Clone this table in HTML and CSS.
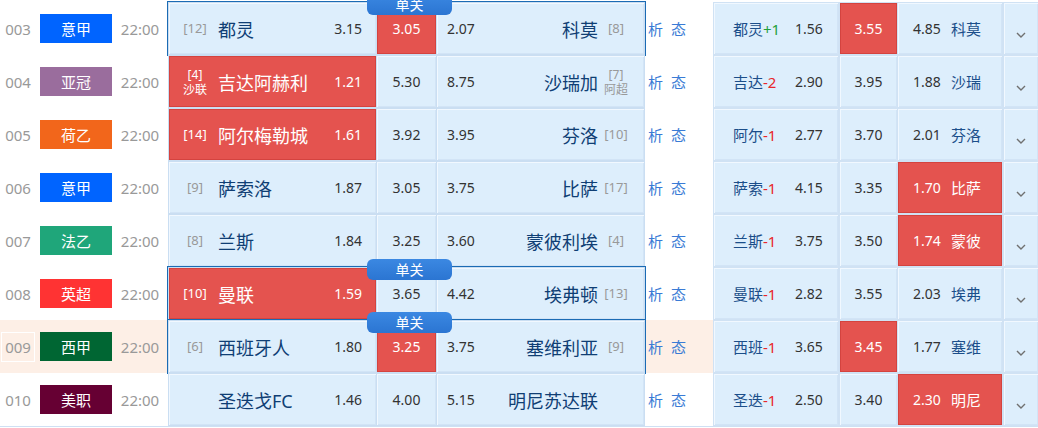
FILE: index.html
```html
<!DOCTYPE html>
<html lang="zh-CN">
<head>
<meta charset="utf-8">
<title>赛事列表</title>
<link rel="stylesheet" href="styles.css">
</head>
<body>
<div class="list">

  <div class="row">
    <div class="num"><span>003</span></div>
    <div class="lg"><span class="badge c-yijia">意甲</span></div>
    <div class="time">22:00</div>
    <div class="main sel">
      <span class="tag">单关</span>
      <div class="cell home"><span class="rank">[12]</span><span class="team">都灵</span><span class="odd">3.15</span></div>
      <div class="cell draw hot">3.05</div>
      <div class="cell away"><span class="odd">2.07</span><span class="team">科莫</span><span class="rank">[8]</span></div>
    </div>
    <div class="ana"><span>析</span><span>态</span></div>
    <div class="hc">
      <div class="cell h1"><span class="hteam">都灵<em class="up">+1</em></span><span class="odd">1.56</span></div>
      <div class="cell h2 hot">3.55</div>
      <div class="cell h3"><span class="odd">4.85</span><span class="hteam">科莫</span></div>
      <div class="cell h4"><svg width="10" height="6" viewBox="0 0 10 6"><polyline points="1,1 5,5 9,1" fill="none" stroke="#707070" stroke-width="1.4"/></svg></div>
    </div>
  </div>

  <div class="row">
    <div class="num"><span>004</span></div>
    <div class="lg"><span class="badge c-yaguan">亚冠</span></div>
    <div class="time">22:00</div>
    <div class="main">
      <div class="cell home hot"><span class="rank two">[4]<br>沙联</span><span class="team">吉达阿赫利</span><span class="odd">1.21</span></div>
      <div class="cell draw">5.30</div>
      <div class="cell away"><span class="odd">8.75</span><span class="team">沙瑞加</span><span class="rank two">[7]<br>阿超</span></div>
    </div>
    <div class="ana"><span>析</span><span>态</span></div>
    <div class="hc">
      <div class="cell h1"><span class="hteam">吉达<em class="down">-2</em></span><span class="odd">2.90</span></div>
      <div class="cell h2">3.95</div>
      <div class="cell h3"><span class="odd">1.88</span><span class="hteam">沙瑞</span></div>
      <div class="cell h4"><svg width="10" height="6" viewBox="0 0 10 6"><polyline points="1,1 5,5 9,1" fill="none" stroke="#707070" stroke-width="1.4"/></svg></div>
    </div>
  </div>

  <div class="row">
    <div class="num"><span>005</span></div>
    <div class="lg"><span class="badge c-heyi">荷乙</span></div>
    <div class="time">22:00</div>
    <div class="main">
      <div class="cell home hot"><span class="rank">[14]</span><span class="team">阿尔梅勒城</span><span class="odd">1.61</span></div>
      <div class="cell draw">3.92</div>
      <div class="cell away"><span class="odd">3.95</span><span class="team">芬洛</span><span class="rank">[10]</span></div>
    </div>
    <div class="ana"><span>析</span><span>态</span></div>
    <div class="hc">
      <div class="cell h1"><span class="hteam">阿尔<em class="down">-1</em></span><span class="odd">2.77</span></div>
      <div class="cell h2">3.70</div>
      <div class="cell h3"><span class="odd">2.01</span><span class="hteam">芬洛</span></div>
      <div class="cell h4"><svg width="10" height="6" viewBox="0 0 10 6"><polyline points="1,1 5,5 9,1" fill="none" stroke="#707070" stroke-width="1.4"/></svg></div>
    </div>
  </div>

  <div class="row">
    <div class="num"><span>006</span></div>
    <div class="lg"><span class="badge c-yijia">意甲</span></div>
    <div class="time">22:00</div>
    <div class="main">
      <div class="cell home"><span class="rank">[9]</span><span class="team">萨索洛</span><span class="odd">1.87</span></div>
      <div class="cell draw">3.05</div>
      <div class="cell away"><span class="odd">3.75</span><span class="team">比萨</span><span class="rank">[17]</span></div>
    </div>
    <div class="ana"><span>析</span><span>态</span></div>
    <div class="hc">
      <div class="cell h1"><span class="hteam">萨索<em class="down">-1</em></span><span class="odd">4.15</span></div>
      <div class="cell h2">3.35</div>
      <div class="cell h3 hot"><span class="odd">1.70</span><span class="hteam">比萨</span></div>
      <div class="cell h4"><svg width="10" height="6" viewBox="0 0 10 6"><polyline points="1,1 5,5 9,1" fill="none" stroke="#707070" stroke-width="1.4"/></svg></div>
    </div>
  </div>

  <div class="row">
    <div class="num"><span>007</span></div>
    <div class="lg"><span class="badge c-fayi">法乙</span></div>
    <div class="time">22:00</div>
    <div class="main">
      <div class="cell home"><span class="rank">[8]</span><span class="team">兰斯</span><span class="odd">1.84</span></div>
      <div class="cell draw">3.25</div>
      <div class="cell away"><span class="odd">3.60</span><span class="team">蒙彼利埃</span><span class="rank">[4]</span></div>
    </div>
    <div class="ana"><span>析</span><span>态</span></div>
    <div class="hc">
      <div class="cell h1"><span class="hteam">兰斯<em class="down">-1</em></span><span class="odd">3.75</span></div>
      <div class="cell h2">3.50</div>
      <div class="cell h3 hot"><span class="odd">1.74</span><span class="hteam">蒙彼</span></div>
      <div class="cell h4"><svg width="10" height="6" viewBox="0 0 10 6"><polyline points="1,1 5,5 9,1" fill="none" stroke="#707070" stroke-width="1.4"/></svg></div>
    </div>
  </div>

  <div class="row">
    <div class="num"><span>008</span></div>
    <div class="lg"><span class="badge c-yingchao">英超</span></div>
    <div class="time">22:00</div>
    <div class="main sel">
      <span class="tag">单关</span>
      <div class="cell home hot"><span class="rank">[10]</span><span class="team">曼联</span><span class="odd">1.59</span></div>
      <div class="cell draw">3.65</div>
      <div class="cell away"><span class="odd">4.42</span><span class="team">埃弗顿</span><span class="rank">[13]</span></div>
    </div>
    <div class="ana"><span>析</span><span>态</span></div>
    <div class="hc">
      <div class="cell h1"><span class="hteam">曼联<em class="down">-1</em></span><span class="odd">2.82</span></div>
      <div class="cell h2">3.55</div>
      <div class="cell h3"><span class="odd">2.03</span><span class="hteam">埃弗</span></div>
      <div class="cell h4"><svg width="10" height="6" viewBox="0 0 10 6"><polyline points="1,1 5,5 9,1" fill="none" stroke="#707070" stroke-width="1.4"/></svg></div>
    </div>
  </div>

  <div class="row hl">
    <div class="num"><span>009</span></div>
    <div class="lg"><span class="badge c-xijia">西甲</span></div>
    <div class="time">22:00</div>
    <div class="main sel">
      <span class="tag">单关</span>
      <div class="cell home"><span class="rank">[6]</span><span class="team">西班牙人</span><span class="odd">1.80</span></div>
      <div class="cell draw hot">3.25</div>
      <div class="cell away"><span class="odd">3.75</span><span class="team">塞维利亚</span><span class="rank">[9]</span></div>
    </div>
    <div class="ana"><span>析</span><span>态</span></div>
    <div class="hc">
      <div class="cell h1"><span class="hteam">西班<em class="down">-1</em></span><span class="odd">3.65</span></div>
      <div class="cell h2 hot">3.45</div>
      <div class="cell h3"><span class="odd">1.77</span><span class="hteam">塞维</span></div>
      <div class="cell h4"><svg width="10" height="6" viewBox="0 0 10 6"><polyline points="1,1 5,5 9,1" fill="none" stroke="#707070" stroke-width="1.4"/></svg></div>
    </div>
  </div>

  <div class="row last">
    <div class="num"><span>010</span></div>
    <div class="lg"><span class="badge c-meizhi">美职</span></div>
    <div class="time">22:00</div>
    <div class="main">
      <div class="cell home"><span class="rank"></span><span class="team">圣迭戈FC</span><span class="odd">1.46</span></div>
      <div class="cell draw">4.00</div>
      <div class="cell away"><span class="odd">5.15</span><span class="team">明尼苏达联</span><span class="rank"></span></div>
    </div>
    <div class="ana"><span>析</span><span>态</span></div>
    <div class="hc">
      <div class="cell h1"><span class="hteam">圣迭<em class="down">-1</em></span><span class="odd">2.50</span></div>
      <div class="cell h2">3.40</div>
      <div class="cell h3 hot"><span class="odd">2.30</span><span class="hteam">明尼</span></div>
      <div class="cell h4"><svg width="10" height="6" viewBox="0 0 10 6"><polyline points="1,1 5,5 9,1" fill="none" stroke="#707070" stroke-width="1.4"/></svg></div>
    </div>
  </div>

</div>
</body>
</html>
```

FILE: styles.css
```css
* { box-sizing: border-box; margin: 0; padding: 0; }
html, body { width: 1038px; height: 428px; overflow: hidden; background: #fff; }
body {
  font-family: "Noto Sans", "Noto Sans CJK SC", sans-serif;
  color: #333;
  padding-top: 2px;
}
.list { width: 1038px; }
.row { display: flex; height: 53px; width: 1038px; }
.row > * { flex-shrink: 0; }
.row.hl { background: #fdefe6; }
.row.last { border-bottom: 1px solid #cfe0f3; height: 54px; }

.num { width: 36px; display: flex; align-items: center; justify-content: center; }
.num span {
  width: 34px; height: 30px; display: flex; align-items: center; justify-content: center;
  font-size: 15px; color: #999; border: 1px solid transparent;
}
.row.hl .num span { border-color: #fff; }

.lg { width: 76px; padding-left: 4px; display: flex; align-items: center; }
.badge {
  width: 72px; height: 29px; display: flex; align-items: center; justify-content: center;
  color: #fff; font-size: 15px;
}
.c-yijia { background: #0064ff; }
.c-yaguan { background: #9a6d9d; }
.c-heyi { background: #f2661b; }
.c-fayi { background: #1fa67a; }
.c-yingchao { background: #ff3333; }
.c-xijia { background: #006633; }
.c-meizhi { background: #660033; }

.time { width: 56px; display: flex; align-items: center; justify-content: center; font-size: 15px; color: #999; }

.main {
  position: relative; width: 477px; display: flex; gap: 1px;
  padding: 1px; background: #cadef2;
}
.main.sel { outline: 1px solid #1b6bb4; }
.tag {
  position: absolute; left: 199px; top: -8px; width: 85px; height: 21px;
  border-radius: 6px; background: linear-gradient(#3b88e2, #2b75d2);
  color: #fff; font-size: 14px; line-height: 21px; text-align: center; z-index: 3;
}

.cell {
  display: flex; align-items: center; background: #ddeefc;
  box-shadow: inset 1px 1px 0 #f1f8ff, inset -1px -1px 0 #d2e4f6;
}
.odd { font-size: 14px; color: #333; }
.home { width: 207px; padding: 0 14px 0 3px; }
.rank { width: 46px; text-align: center; font-size: 13px; color: #999; line-height: 15px; }
.rank.two { font-size: 12px; line-height: 15px; }
.team { flex: 1; font-size: 18px; color: #0f3e74; white-space: nowrap; }
.draw { width: 59px; justify-content: center; font-size: 14px; }
.away { width: 207px; padding: 0 10px; }
.away .team { text-align: right; }
.away .rank { width: 36px; }

.hot { background: #e4534f; box-shadow: inset 0 0 0 1px #d4433f; }
.hot, .hot .odd, .hot .team, .hot .rank, .hot .hteam { color: #fff; }

.ana { width: 68px; display: flex; align-items: center; gap: 8px; padding-left: 3px; font-size: 15px; color: #3a7bd5; }

.hc { width: 325px; display: flex; padding: 1px 0 1px 1px; background: #d0e2f4; }
.h1 { width: 124px; margin-right: 2px; padding-left: 19px; }
.hteam { width: 62px; font-size: 15px; color: #1b4e8a; white-space: nowrap; }
.hteam em { font-style: normal; }
.up { color: #1f9f3a; }
.down { color: #e8262a; }
.h2 { width: 57px; margin-right: 1px; justify-content: center; font-size: 14px; }
.h3 { width: 104px; margin-right: 2px; padding-left: 15px; }
.h3 .odd { width: 46px; }
.h4 { flex: 1; min-width: 0; justify-content: center; align-items: flex-end; padding-bottom: 16px; }
```
